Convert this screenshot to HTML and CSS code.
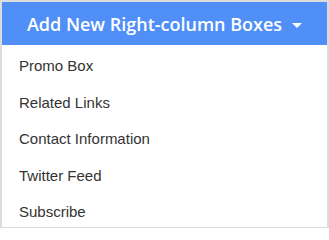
FILE: index.html
```html
<!DOCTYPE html>
<html>
<head>
<meta charset="utf-8">
<link rel="stylesheet" href="styles.css">
</head>
<body>
<div class="panel">
  <div class="header">
    <span class="title">Add New Right-column Boxes</span>
    <span class="caret"></span>
  </div>
  <ul class="menu">
    <li>Promo Box</li>
    <li>Related Links</li>
    <li>Contact Information</li>
    <li>Twitter Feed</li>
    <li>Subscribe</li>
  </ul>
</div>
</body>
</html>
```
FILE: styles.css
```css
html, body {
  margin: 0;
  padding: 0;
  background: #fff;
}
.panel {
  width: 329px;
  height: 228px;
  box-sizing: border-box;
  border: 2px solid #dcdcdc;
  border-bottom-width: 1px;
  overflow: hidden;
}
.header {
  height: 43px;
  background: #4f8ff7;
  display: flex;
  align-items: center;
  justify-content: center;
  gap: 10px;
  color: #fff;
}
.title {
  font-family: "Open Sans", sans-serif;
  font-weight: 600;
  font-size: 18px;
}
.caret {
  width: 0;
  height: 0;
  border-top: 5px solid #fff;
  border-left: 5px solid transparent;
  border-right: 5px solid transparent;
  margin-top: 3px;
}
.menu {
  list-style: none;
  margin: 0;
  padding: 3px 0 0 0;
}
.menu li {
  font-family: "Liberation Sans", Arial, sans-serif;
  font-size: 15px;
  color: #333;
  height: 36.5px;
  line-height: 36.5px;
  padding-left: 17px;
}
```
